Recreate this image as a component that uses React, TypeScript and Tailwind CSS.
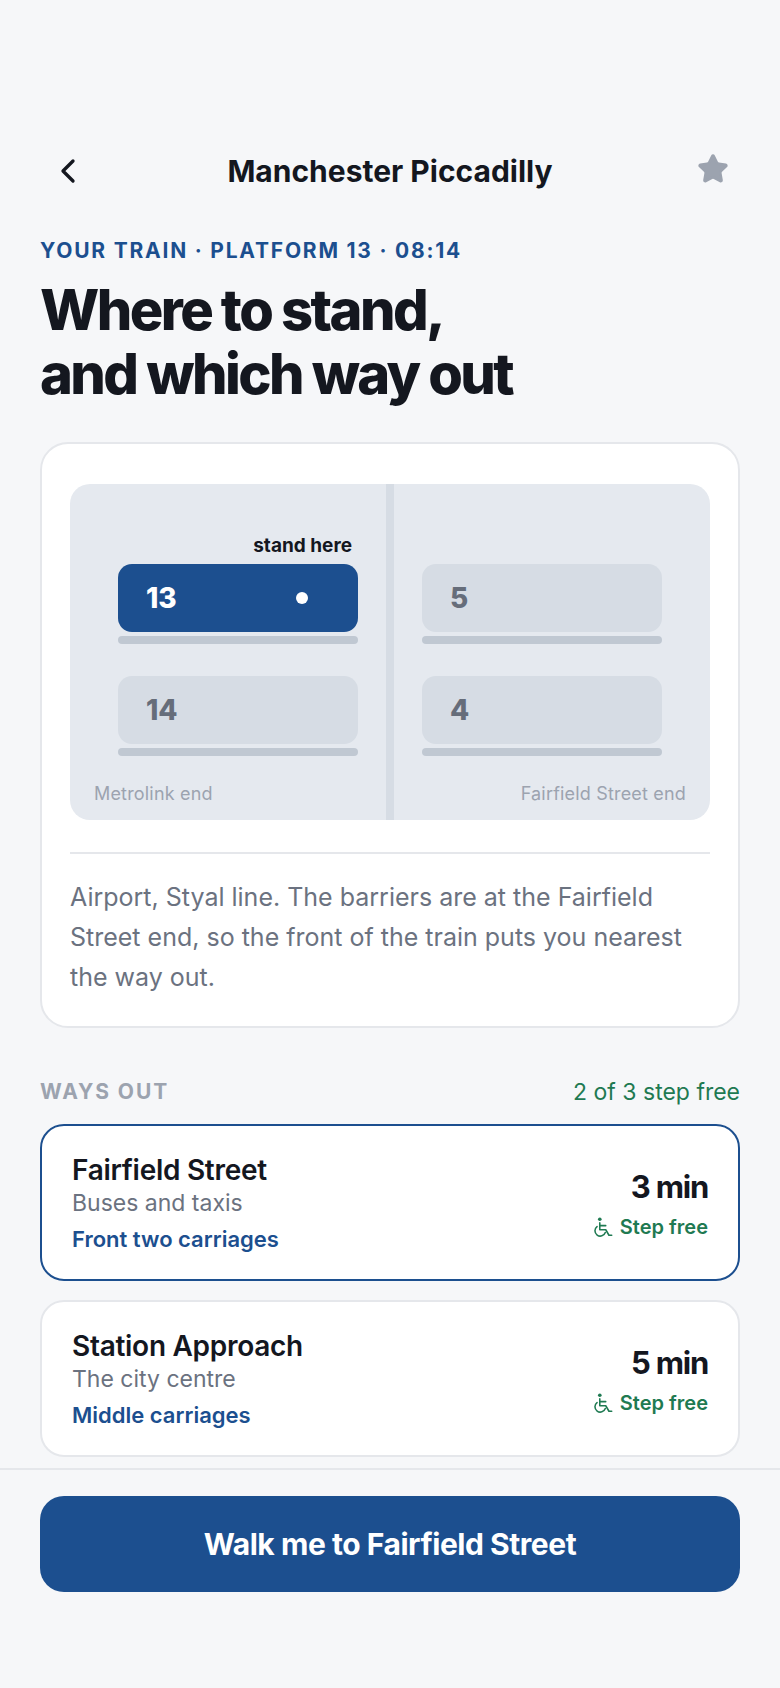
import { ChevronLeft, Star } from 'lucide-react';

function StepFreeIcon() {
  return (
    <svg width="22" height="22" viewBox="0 0 24 24" fill="none" stroke="currentColor" strokeWidth="1.7" strokeLinecap="round" strokeLinejoin="round">
      <circle cx="8.5" cy="3.5" r="2" fill="currentColor" stroke="none" />
      <path d="M8.5 7.5v7.5h6.5l3.5 6h3" />
      <path d="M8.5 10.5h6.5" />
      <path d="M5.5 11.5a5.8 5.8 0 1 0 9 6.5" />
    </svg>
  );
}

function Car({ num, active, label }: { num: string; active?: boolean; label?: boolean }) {
  return (
    <div className="w-[240px]">
      <div
        className={
          active
            ? 'relative flex h-[68px] items-center rounded-[14px] bg-[#1c4f8f] pl-7 text-[28px] font-extrabold text-white'
            : 'relative flex h-[68px] items-center rounded-[14px] bg-[#d6dce4] pl-7 text-[28px] font-extrabold text-[#666d7a]'
        }
      >
        {num}
        {active && <span className="absolute left-[178px] top-[28px] h-3 w-3 rounded-full bg-white" />}
        {label && (
          <span className="absolute bottom-[72px] right-[6px] text-[19px] leading-7 font-bold whitespace-nowrap text-[#14171f]">
            stand here
          </span>
        )}
      </div>
      <div className="mt-1 h-2 rounded-[4px] bg-[#c0c8d2]" />
    </div>
  );
}

function WayOut({ name, sub, where, mins, active }: { name: string; sub: string; where: string; mins: string; active?: boolean }) {
  return (
    <div
      className={
        active
          ? 'flex h-[157px] items-center justify-between rounded-[24px] border-2 border-[#1c4f8f] bg-white px-[30px]'
          : 'flex h-[157px] items-center justify-between rounded-[24px] border-2 border-[#e5e7eb] bg-white px-[30px]'
      }
    >
      <div className="pt-[2px]">
        <div className="text-[28px] leading-[34px] font-semibold tracking-[-0.01em] text-[#14171f]">{name}</div>
        <div className="mt-[1px] text-[23px] leading-[30px] text-[#6b7280]">{sub}</div>
        <div className="mt-[5px] text-[22px] leading-[32px] font-semibold text-[#1c4f8f]">{where}</div>
      </div>
      <div className="flex flex-col items-end pt-[3px]">
        <div className="text-[31px] leading-[38px] font-bold tracking-[-0.04em] text-[#14171f]">{mins}</div>
        <div className="mt-[7px] flex items-center gap-[6px] text-[20px] leading-7 font-semibold text-[#1f7a52]">
          <StepFreeIcon />
          Step free
        </div>
      </div>
    </div>
  );
}

export default function App() {
  return (
    <div className="flex h-[1688px] w-[780px] flex-col overflow-hidden bg-[#f6f7f9] font-['Inter',sans-serif]">
      <div className="flex-1 px-10 pt-[148px]">
        <div className="relative flex h-[46px] items-center justify-center">
          <ChevronLeft className="absolute left-[8px] top-[3px] text-[#14171f]" size={40} strokeWidth={2} />
          <h2 className="text-[30px] leading-[46px] font-bold text-[#14171f]">Manchester Piccadilly</h2>
          <Star className="absolute right-[11px] top-[5px] text-[#9ca3af]" size={32} fill="currentColor" strokeWidth={2} />
        </div>
        <div className="mt-[43px] text-[21px] leading-7 font-bold tracking-[0.085em] text-[#1c4f8f]">YOUR TRAIN · PLATFORM 13 · 08:14</div>
        <h1 className="mt-[13px] text-[56px] leading-[64px] font-extrabold tracking-[-0.046em] text-[#14171f]">
          Where to stand,
          <br />
          and which way out
        </h1>

        <div className="mt-[36px] rounded-[28px] border-2 border-[#e5e7eb] bg-white px-7 pt-10 pb-[29px]">
          <div className="relative flex h-[336px] overflow-hidden rounded-[20px] bg-[#e5e9ef]">
            <div className="flex w-[316px] flex-col gap-[32px] pt-[80px] pl-12">
              <Car num="13" active label />
              <Car num="14" />
            </div>
            <div className="w-2 bg-[#d6dce4]" />
            <div className="flex flex-1 flex-col gap-[32px] pt-[80px] pl-7">
              <Car num="5" />
              <Car num="4" />
            </div>
            <span className="absolute bottom-[12px] left-[24px] text-[18px] leading-7 tracking-[0.01em] text-[#9ca3af]">Metrolink end</span>
            <span className="absolute right-[24px] bottom-[12px] text-[18px] leading-7 tracking-[0.01em] text-[#9ca3af]">Fairfield Street end</span>
          </div>
          <div className="mt-8 border-t-2 border-[#e5e7eb] pt-[23px] text-[25px] leading-[40px] text-[#6b7280]">
            Airport, Styal line. The barriers are at the Fairfield Street end, so the front of the train puts you nearest the way out.
          </div>
        </div>

        <div className="mt-[50px] flex items-center justify-between">
          <span className="text-[21px] leading-7 font-bold tracking-[0.09em] text-[#9ca3af]">WAYS OUT</span>
          <span className="text-[23px] leading-7 text-[#1f7a52]">2 of 3 step free</span>
        </div>
        <div className="mt-[18px] flex flex-col gap-[19px]">
          <WayOut name="Fairfield Street" sub="Buses and taxis" where="Front two carriages" mins="3 min" active />
          <WayOut name="Station Approach" sub="The city centre" where="Middle carriages" mins="5 min" />
        </div>
      </div>
      <div className="h-[220px] border-t-2 border-[#e5e7eb] px-10 pt-[26px]">
        <button className="h-24 w-full rounded-[24px] bg-[#1c4f8f] text-[30px] font-bold tracking-[-0.015em] text-white">Walk me to Fairfield Street</button>
      </div>
    </div>
  );
}
